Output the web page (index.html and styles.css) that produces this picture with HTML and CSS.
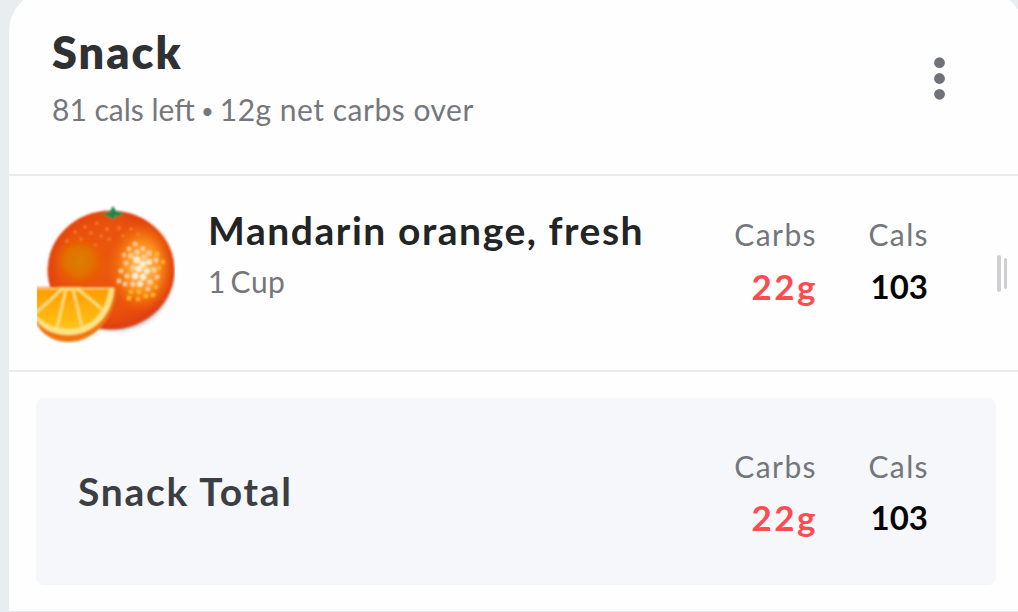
FILE: index.html
```html
<!DOCTYPE html>
<html lang="en">
<head>
    <meta charset="UTF-8">
    <title>Snack</title>
    <link rel="stylesheet" href="styles.css">
</head>
<body>
    <div class="meal-card">
        <div class="meal-header">
            <div>
                <h1>Snack</h1>
                <p class="summary">81 cals left <span class="dot">•</span> <span class="net">12g net carbs over</span></p>
            </div>
            <svg class="menu-icon" width="12" height="44" viewBox="0 0 12 44">
                <circle cx="6.5" cy="6.7" r="5.4"/>
                <circle cx="6.5" cy="22.5" r="5.4"/>
                <circle cx="6.5" cy="38.3" r="5.4"/>
            </svg>
        </div>

        <div class="food-row">
            <svg class="food-image" width="138" height="138" viewBox="0 0 138 138">
                <defs>
                    <radialGradient id="peel" cx="0.48" cy="0.48" r="0.55">
                        <stop offset="0" stop-color="#ec5a07"/>
                        <stop offset="0.7" stop-color="#e95008"/>
                        <stop offset="1" stop-color="#dc3a16"/>
                    </radialGradient>
                    <radialGradient id="glow">
                        <stop offset="0" stop-color="#ffc064"/>
                        <stop offset="0.5" stop-color="#fb9420"/>
                        <stop offset="1" stop-color="#f37005" stop-opacity="0"/>
                    </radialGradient>
                    <radialGradient id="spot">
                        <stop offset="0" stop-color="#dc7c00"/>
                        <stop offset="0.5" stop-color="#e17202"/>
                        <stop offset="1" stop-color="#ea5a06" stop-opacity="0"/>
                    </radialGradient>
                    <linearGradient id="pulp" x1="0" y1="0" x2="0" y2="1">
                        <stop offset="0" stop-color="#ff9d00"/>
                        <stop offset="1" stop-color="#ffc316"/>
                    </linearGradient>
                    <filter id="soft" x="-10%" y="-10%" width="120%" height="120%">
                        <feGaussianBlur stdDeviation="0.9"/>
                    </filter>
                    <filter id="shadow"><feGaussianBlur stdDeviation="2"/></filter>
                    <clipPath id="corner"><rect width="138" height="138" rx="14"/></clipPath>
                </defs>
                <g clip-path="url(#corner)">
                    <ellipse cx="78" cy="71" rx="58" ry="55" fill="#aaa" opacity="0.6" filter="url(#shadow)"/>
                    <g filter="url(#soft)">
                        <ellipse cx="74" cy="65" rx="63.5" ry="59.5" fill="url(#peel)"/>
                        <ellipse cx="105" cy="62" rx="33" ry="46" fill="url(#glow)"/>
                        <circle cx="42" cy="56" r="27" fill="url(#spot)"/>
                        <g fill="#f9812c">
                            <circle cx="38" cy="27" r="1.5"/><circle cx="48" cy="22" r="1.5"/>
                            <circle cx="54" cy="28" r="1.6"/><circle cx="60" cy="18" r="1.5"/>
                            <circle cx="64" cy="31" r="1.5"/><circle cx="70" cy="24" r="1.7"/>
                            <circle cx="72" cy="34" r="1.6"/><circle cx="82" cy="23" r="1.8"/>
                            <circle cx="86" cy="31" r="1.6"/><circle cx="94" cy="24" r="1.5"/>
                            <circle cx="44" cy="34" r="1.4"/><circle cx="58" cy="40" r="1.4"/>
                            <circle cx="101" cy="29" r="1.6"/><circle cx="30" cy="36" r="1.5"/>
                        </g>
                        <g fill="#ffd293">
                            <circle cx="98" cy="39" r="2.3"/><circle cx="92" cy="44" r="2"/>
                            <circle cx="87" cy="50" r="2"/><circle cx="94" cy="51" r="2.7"/>
                            <circle cx="100" cy="47" r="2.6"/><circle cx="106" cy="44" r="2.3"/>
                            <circle cx="112" cy="48" r="2.6"/><circle cx="107" cy="52" r="2.6"/>
                            <circle cx="89" cy="58" r="2.2"/><circle cx="96" cy="63" r="2.8"/>
                            <circle cx="119" cy="55" r="2.4"/><circle cx="117" cy="65" r="2.7"/>
                            <circle cx="84" cy="66" r="2.2"/><circle cx="90" cy="71" r="2.3"/>
                            <circle cx="82" cy="76" r="2.2"/><circle cx="88" cy="79" r="2.3"/>
                            <circle cx="96" cy="79" r="2.6"/><circle cx="113" cy="77" r="2.8"/>
                            <circle cx="120" cy="72" r="2.3"/><circle cx="111" cy="84" r="2.2"/>
                        </g>
                        <g fill="#fff0cf">
                            <circle cx="100" cy="55" r="3.4"/><circle cx="106" cy="59" r="3"/>
                            <circle cx="112" cy="57" r="2.8"/><circle cx="102" cy="64" r="3.2"/>
                            <circle cx="110" cy="66" r="2.9"/><circle cx="98" cy="71" r="3.2"/>
                            <circle cx="106" cy="72" r="3.2"/><circle cx="103" cy="79" r="2.8"/>
                        </g>
                        <g fill="#ffb927">
                            <circle cx="120" cy="49" r="2.4"/><circle cx="126" cy="57" r="2.1"/>
                            <circle cx="122" cy="63" r="2"/><circle cx="94" cy="87" r="2.3"/>
                            <circle cx="102" cy="87" r="2.4"/><circle cx="109" cy="91" r="2.3"/>
                            <circle cx="92" cy="93" r="2.3"/><circle cx="101" cy="94" r="2.1"/>
                            <circle cx="116" cy="90" r="2.3"/><circle cx="119" cy="82" r="2"/>
                        </g>
                        <path fill="#148a48" d="M65 10 L73 6 L76 1 L79 6 L87 8 L82 12 L79 11 L76 15 L72 12 Z"/>
                        <path fill="#ef7808" d="M-4 82 H79 C80 110 59 137 31 137 C10 137 -2 122 -4 108 Z"/>
                        <path fill="#ffe383" d="M-4 83 H77 C76 109 57 130 32 130 C12 130 0 120 -4 109 Z"/>
                        <path fill="url(#pulp)" d="M-4 84 H72 C70 107 53 124 32 124 C14 124 2 116 -4 106 Z"/>
                        <g fill="none" stroke="#ffe17c" stroke-width="2.5">
                            <path d="M25 84 L-1 108"/>
                            <path d="M29 84 L20 123"/>
                            <path d="M36 84 L45 122"/>
                            <path d="M41 84 L66 105"/>
                            <path stroke-width="3" d="M22 84 H44"/>
                        </g>
                    </g>
                </g>
            </svg>
            <div class="food-info">
                <h2>Mandarin orange, fresh</h2>
                <p class="serving">1 Cup</p>
            </div>
            <div class="stats">
                <div class="stat carbs">
                    <span class="label">Carbs</span>
                    <span class="value over">22g</span>
                </div>
                <div class="stat cals">
                    <span class="label">Cals</span>
                    <span class="value">103</span>
                </div>
            </div>
            <div class="drag-handle"><i></i><i></i></div>
        </div>

        <div class="total-row">
            <div class="total-box">
                <h3>Snack Total</h3>
                <div class="stats">
                    <div class="stat carbs">
                        <span class="label">Carbs</span>
                        <span class="value over">22g</span>
                    </div>
                    <div class="stat cals">
                        <span class="label">Cals</span>
                        <span class="value">103</span>
                    </div>
                </div>
            </div>
        </div>
    </div>
</body>
</html>
```
FILE: styles.css
```css
* { box-sizing: border-box; }
body {
    margin: 0;
    height: 612px;
    overflow: hidden;
    display: flex;
    background: #e9edf0;
    font-family: Lato, "Open Sans", sans-serif;
    white-space: nowrap;
}
h1, h2, h3, p { margin: 0; }

.meal-card {
    flex: none;
    width: 1015px;
    height: 630px;
    margin: -9px 0 0 9px;
    background: #fefefe;
    border-radius: 40px 40px 0 0;
}

/* header */
.meal-header {
    display: flex;
    justify-content: space-between;
    height: 185px;
    padding: 35px 79px 0 43px;
    border-bottom: 2px solid #e9eaeb;
}
h1 {
    font-size: 45px;
    line-height: 52px;
    font-weight: 800;
    letter-spacing: 2px;
    color: #303132;
}
.summary {
    display: flex;
    align-items: center;
    margin-top: 13px;
    font-size: 30px;
    line-height: 36px;
    color: #76777c;
}
.dot {
    width: 25px;
    padding-top: 3px;
    font-size: 22px;
    line-height: 30px;
    text-align: center;
}
.net { letter-spacing: 0.5px; }
.menu-icon {
    margin-top: 30px;
    fill: #717278;
    overflow: visible;
}

/* food */
.food-row {
    display: flex;
    height: 196px;
    padding-left: 28px;
    border-bottom: 2px solid #ececed;
}
.food-image {
    flex: none;
    margin-top: 29px;
}
.food-info {
    flex: 1;
    margin: 31px 0 0 33px;
}
h2 {
    font-size: 39px;
    line-height: 46px;
    font-weight: 700;
    letter-spacing: 1.55px;
    color: #222425;
}
.serving {
    margin-top: 10px;
    font-size: 30px;
    line-height: 36px;
    letter-spacing: 0.5px;
    word-spacing: -3.5px;
    color: #76777c;
}
.food-row .stats { margin: 40px 69px 0 0; }
.drag-handle {
    display: flex;
    align-items: center;
    gap: 3px;
    height: 38px;
    margin: 78px 17px 0 0;
}
.drag-handle i {
    width: 4px;
    height: 37px;
    border-radius: 2px;
    background: #cfcfd1;
}
.drag-handle i + i {
    width: 3px;
    height: 31px;
}

/* numbers */
.stats {
    display: flex;
    gap: 52px;
}
.stat {
    display: flex;
    flex-direction: column;
    align-items: flex-end;
    gap: 14px;
}
.cals { width: 60px; }
.label {
    margin-right: -1px;
    font-size: 30px;
    line-height: 36px;
    letter-spacing: 1.4px;
    color: #73767b;
}
.value {
    font-size: 33px;
    line-height: 40px;
    font-weight: 700;
    color: #050505;
}
.over {
    margin-right: -2px;
    font-size: 35px;
    letter-spacing: 2.5px;
    color: #fb4d50;
}

/* total */
.total-row {
    height: 240px;
    padding: 26px 28px 0 27px;
    border-bottom: 1px solid #e9eaeb;
}
.total-box {
    display: flex;
    align-items: center;
    justify-content: space-between;
    height: 187px;
    padding: 0 68px 0 43px;
    border-radius: 8px;
    background: #f6f7fb;
}
.total-box .stats { padding-top: 2px; }
.total-box .stat { gap: 13px; }
h3 {
    margin: -2px 0 0 -1px;
    font-size: 39px;
    line-height: 46px;
    font-weight: 700;
    letter-spacing: 1.75px;
    color: #3b3e42;
}
```
